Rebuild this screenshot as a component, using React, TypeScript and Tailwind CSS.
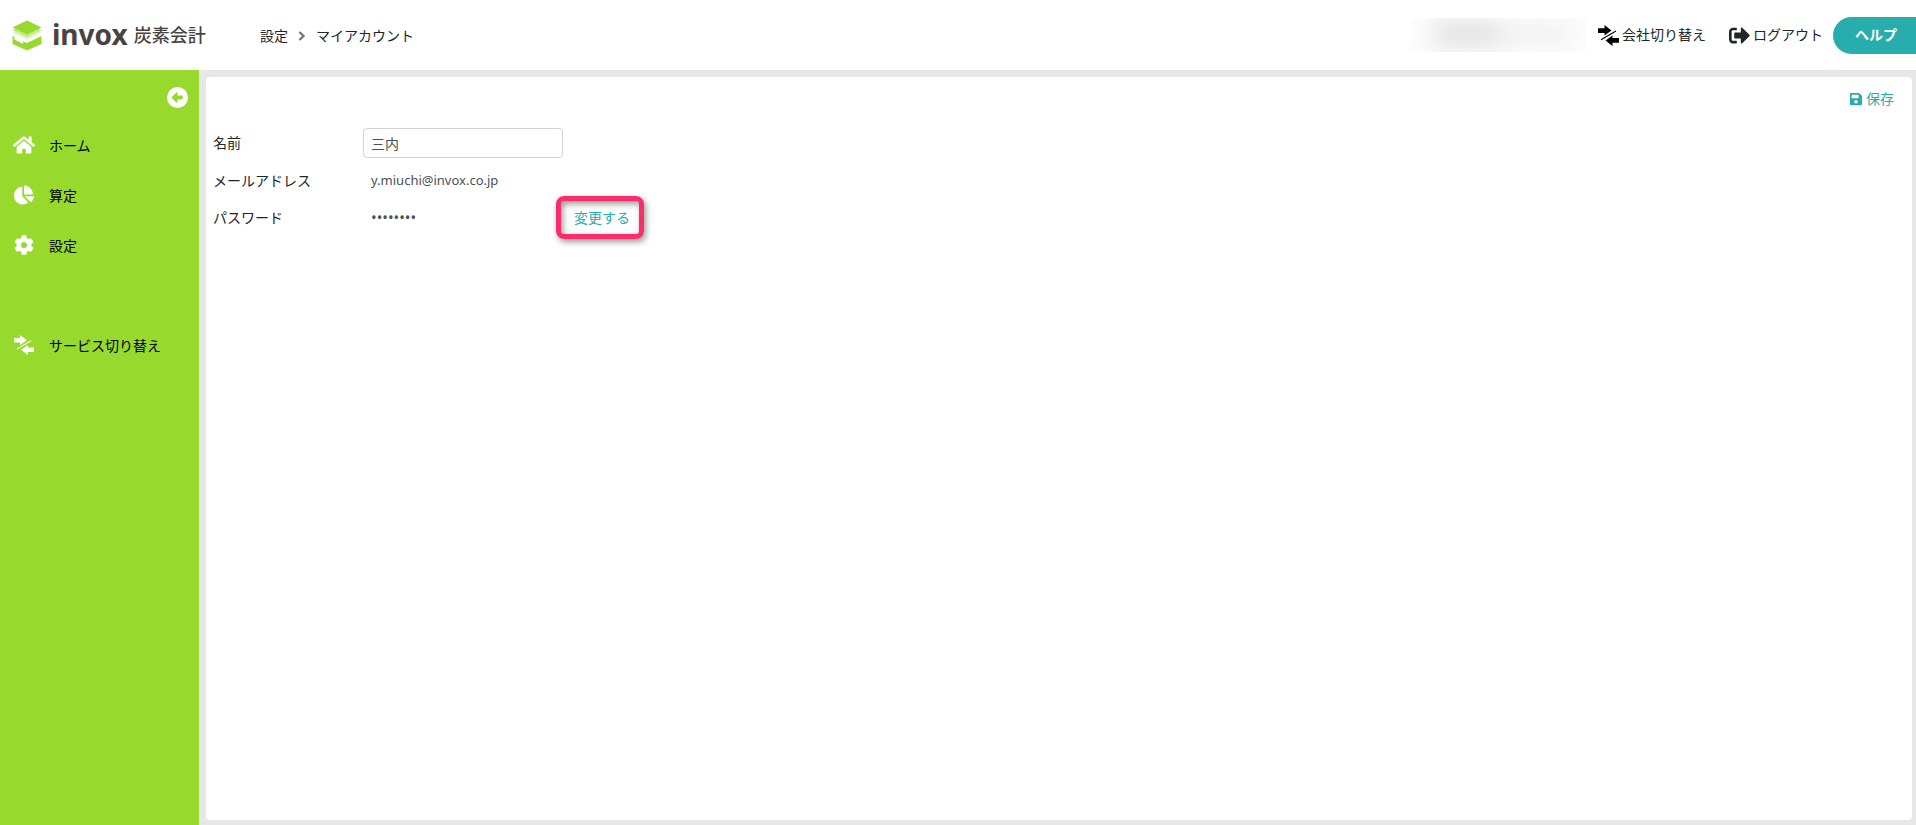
import { useState } from 'react'
import type { ReactNode } from 'react'
import { FaChartPie, FaCog, FaHome, FaSave, FaSignOutAlt } from 'react-icons/fa'
import { FaCircleLeft } from 'react-icons/fa6'

interface NavItemProps {
  icon: ReactNode
  label: string
}

function SwitchIcon({ className }: { className?: string }) {
  return (
    <svg viewBox="0 0 21 21" className={className} fill="currentColor" aria-hidden="true">
      <path d="M0 3.2h6.5V0L13.5 5.5L6.5 10.5V8H0z" />
      <path d="M21 17.8h-6.5V21L7.5 15.5L14.5 10.5V13H21z" />
      <path d="M3 14.8L18 6" stroke="currentColor" strokeWidth="1.1" fill="none" />
    </svg>
  )
}

function Logo() {
  return (
    <a href="#" className="flex items-center text-[#4a4242]">
      <svg viewBox="0 0 30 31" className="h-[31px] w-[30px]" aria-hidden="true">
        <path d="M0.5 16L2.5 17V19.5L11 24V21.5L15 23L29.5 16V24L15 30.5L0.5 24z" fill="#98d92e" />
        <path d="M0.5 12.8L15 20L29.5 12.8L26 10.5L15 16L4 10.5z" fill="#e5f6ca" />
        <path d="M0.5 10.3L15 17.5L29.5 10.3L26 8.5L15 13.5L4 8.5z" fill="#c5ea87" />
        <path d="M0.5 7.5L15 0.5L29.5 7.5L15 14.5z" fill="#98d92e" />
      </svg>
      <span className="ml-2.5 pb-0.5 text-[28px] leading-8 font-bold">invox</span>
      <span className="ml-1.5 text-lg font-medium">炭素会計</span>
    </a>
  )
}

function NavItem({ icon, label }: NavItemProps) {
  return (
    <a href="#" className="flex h-[50px] items-center pl-3 text-black">
      <span className="flex w-6 justify-center text-white">{icon}</span>
      <span className="ml-[13px] pt-px">{label}</span>
    </a>
  )
}

export default function App() {
  const [name, setName] = useState('三内')

  return (
    <div className="flex min-h-screen flex-col bg-[#e7e7e7] font-['Noto_Sans','Noto_Sans_CJK_JP',sans-serif] text-sm text-[#212529]">
      <header className="flex h-[70px] items-center bg-white pl-3">
        <div className="w-[248px]">
          <Logo />
        </div>

        <nav className="flex items-center gap-2.5 pt-px">
          <a href="#">設定</a>
          <svg viewBox="0 0 8 10" className="h-2.5 w-2" fill="none" stroke="#777" strokeWidth="2.4" aria-hidden="true">
            <path d="M1.5 1L5.5 5L1.5 9" />
          </svg>
          <span>マイアカウント</span>
        </nav>

        <div className="ml-auto flex items-center">
          <div className="mr-3 h-[34px] w-44 overflow-hidden bg-[#fdfdfd]">
            <div className="mt-1 ml-6 flex h-6 blur-md">
              <div className="w-16 bg-[#dedede]" />
              <div className="w-18 bg-[#f0f0f0]" />
            </div>
          </div>
          <a href="#" className="mr-[23px] flex items-center gap-[3px]">
            <SwitchIcon className="h-[21px] w-[21px] text-black" />
            会社切り替え
          </a>
          <a href="#" className="mr-2.5 flex items-center gap-[3px]">
            <FaSignOutAlt className="h-[21px] w-[21px]" />
            ログアウト
          </a>
          <button type="button" className="h-[37px] rounded-l-full bg-[#27adac] pr-[19px] pl-[22px] font-bold text-white">
            ヘルプ
          </button>
        </div>
      </header>

      <div className="flex flex-1">
        <aside className="w-[199px] shrink-0 bg-[#98d92e]">
          <div className="flex h-[50px] items-center justify-end pt-1 pr-[11px]">
            <button type="button" aria-label="メニューを閉じる" className="text-white">
              <FaCircleLeft className="h-[21px] w-[21px]" />
            </button>
          </div>
          <nav>
            <NavItem icon={<FaHome className="h-[22px] w-[22px]" />} label="ホーム" />
            <NavItem icon={<FaChartPie className="h-5 w-5" />} label="算定" />
            <NavItem icon={<FaCog className="h-5 w-5" />} label="設定" />
            <div className="mt-[50px]">
              <NavItem icon={<SwitchIcon className="h-5 w-5" />} label="サービス切り替え" />
            </div>
          </nav>
        </aside>

        <main className="mt-[7px] mr-1 mb-[5px] ml-[7px] flex-1 rounded bg-white pl-[7px]">
          <div className="flex justify-end pt-3 pr-[18px]">
            <button type="button" className="flex items-center gap-[3px] text-[#27adac]">
              <FaSave className="h-3.5 w-3.5" />
              保存
            </button>
          </div>

          <form className="mt-4" onSubmit={(e) => e.preventDefault()}>
            <div className="flex h-[37px] items-center pb-0.5">
              <label htmlFor="name" className="w-[150px]">
                名前
              </label>
              <input
                id="name"
                type="text"
                value={name}
                onChange={(e) => setName(e.target.value)}
                className="h-[30px] w-[200px] rounded border border-[#ced4da] px-[7px] text-[#495057]"
              />
            </div>
            <div className="flex h-[37px] items-center">
              <span className="w-[150px]">メールアドレス</span>
              <span className="px-2 text-[13px] text-[#495057]">y.miuchi@invox.co.jp</span>
            </div>
            <div className="flex h-[37px] items-center">
              <span className="w-[150px]">パスワード</span>
              <span className="w-[193px] px-2 text-[15px] text-[#495057]">••••••••</span>
              <button
                type="button"
                className="h-[43px] w-[88px] rounded-lg border-5 border-[#fb2c69] pl-1 text-[#27adac] shadow-[2px_3px_6px_rgba(0,0,0,0.4),inset_2px_3px_6px_rgba(0,0,0,0.4)]"
              >
                変更する
              </button>
            </div>
          </form>
        </main>
      </div>
    </div>
  )
}
